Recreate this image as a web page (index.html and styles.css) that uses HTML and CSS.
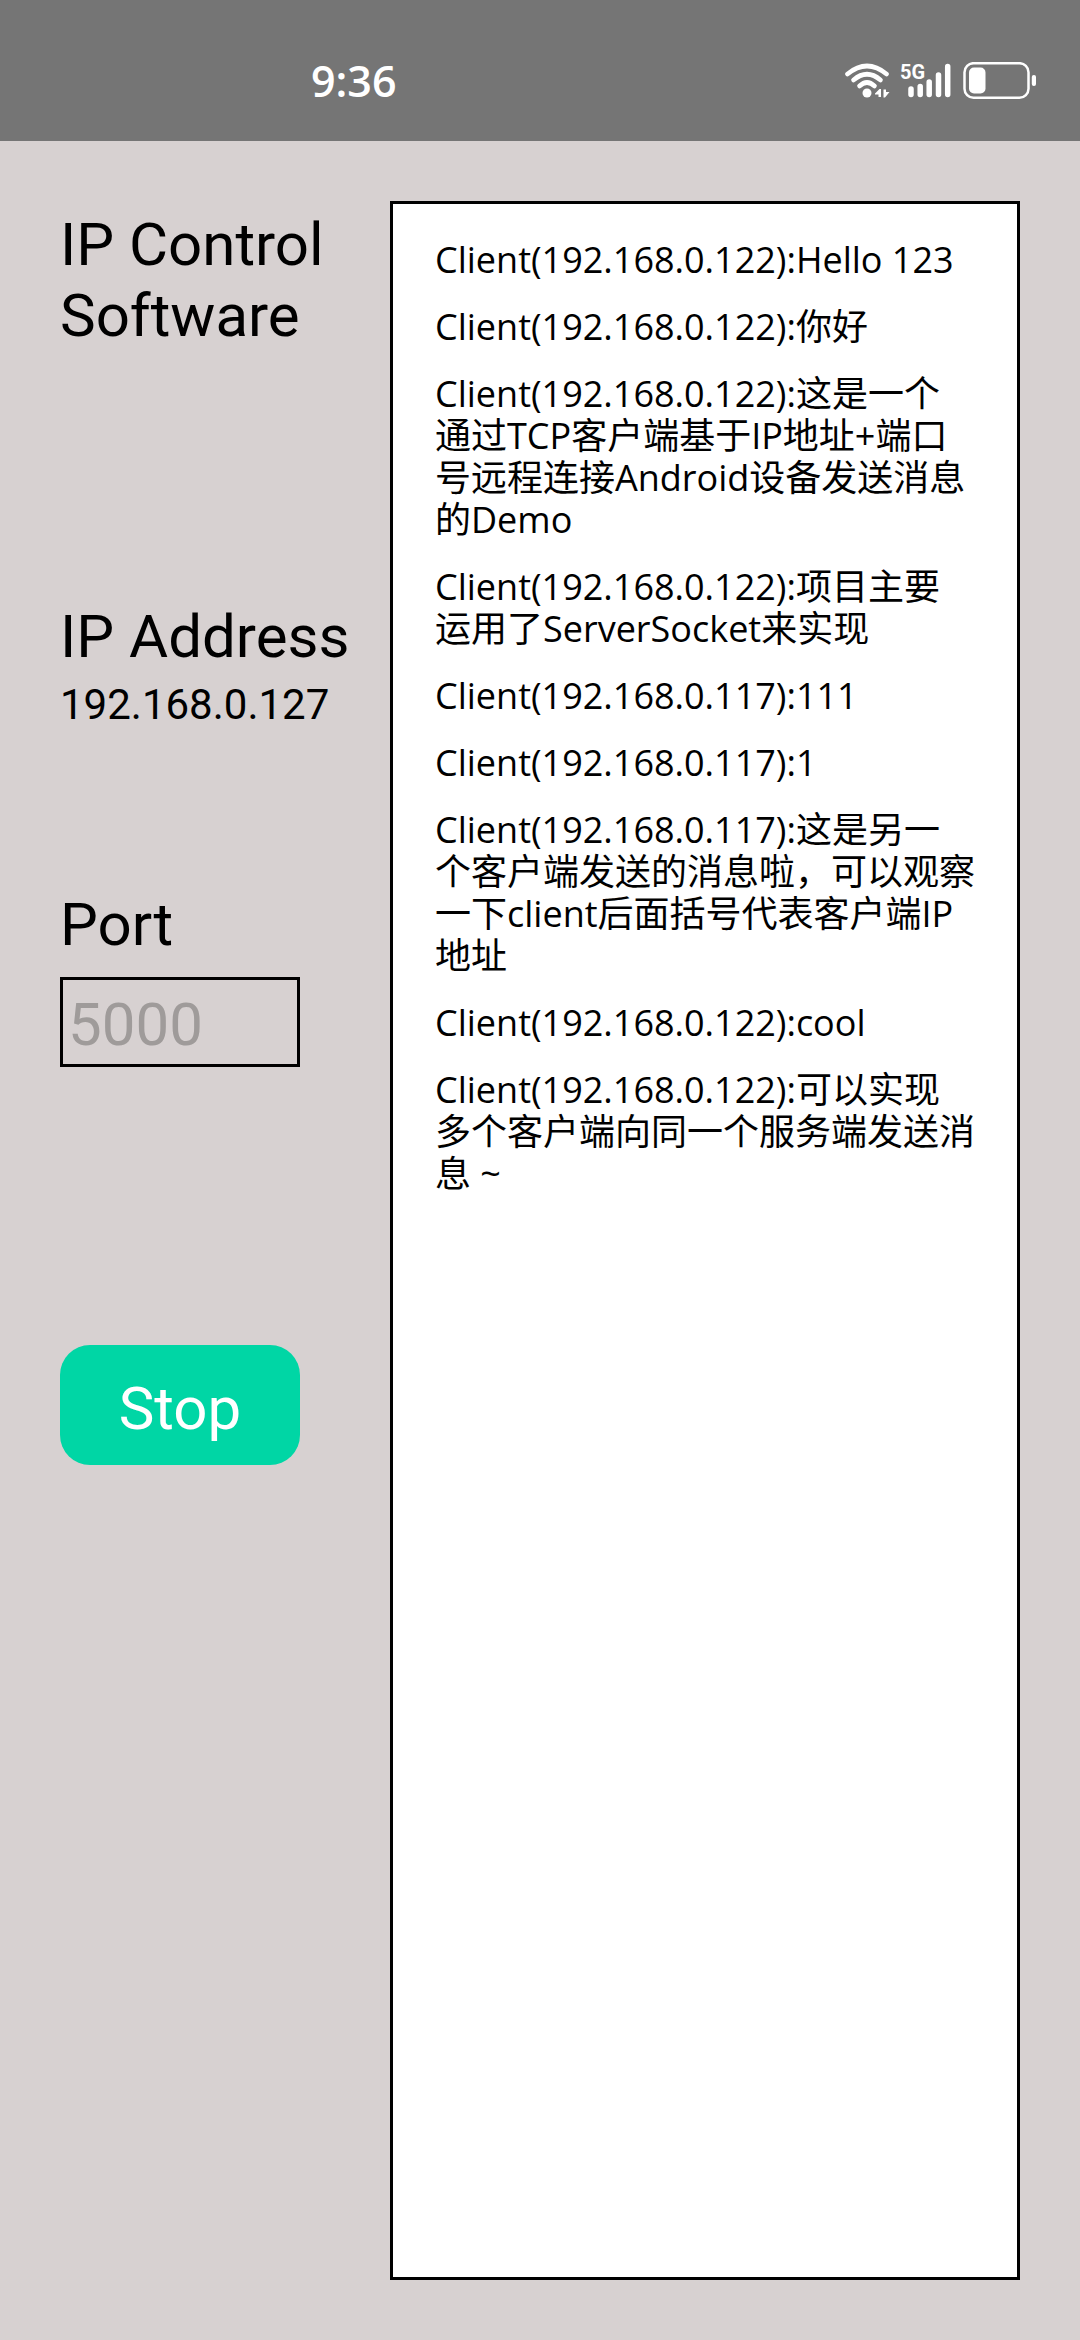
FILE: index.html
```
<!DOCTYPE html>
<html lang="zh-CN">
<head>
<meta charset="utf-8">
<meta name="viewport" content="width=device-width">
<title>IP Control Software</title>
<link rel="stylesheet" href="styles.css">
</head>
<body>
<header class="status-bar">
  <time class="clock">9:36</time>
  <div class="indicators">
    <svg class="wifi" width="46" height="38" viewBox="844 62 46 38" aria-label="Wi-Fi">
      <g fill="none" stroke="#fff" stroke-width="4.6" stroke-linecap="round">
        <path d="M847.5 74Q867 58 886.5 74"/>
        <path d="M853.5 80Q867 68.500 880.500 80"/>
        <path d="M859.500 86Q867 79 874.500 86"/>
      </g>
      <circle cx="867" cy="93" r="4.500" fill="#fff"/>
      <path fill="#fff" d="M875 93.500L879.500 89H881V97H878.500V94.500H875ZM883.500 89.500H886V92H889.500L885 97.500H883.500Z"/>
    </svg>
    <div class="cellular">
      <span class="network">5G</span>
      <svg width="52" height="38" viewBox="900 62 52 38" aria-label="Signal">
        <g stroke="#fff" stroke-width="5.500" stroke-linecap="round">
          <path d="M911 89V94.500M920.200 86.500V94.500M929.200 82V94.500M938.500 75V94.500M947.700 66.500V94.500"/>
        </g>
      </svg>
    </div>
    <svg class="battery" width="76" height="38" viewBox="962 62 76 38" aria-label="Battery">
      <rect x="964.500" y="63.200" width="64" height="34.600" rx="9" fill="none" stroke="#fff" stroke-width="2.500"/>
      <rect x="969" y="67.500" width="16.500" height="26" rx="5" fill="#fff"/>
      <rect x="1031.800" y="75" width="4.200" height="11" rx="2" fill="#fff"/>
    </svg>
  </div>
</header>
<main class="screen">
  <form class="controls">
    <h1 class="heading">IP Control Software</h1>
    <section class="address">
      <h2 class="heading">IP Address</h2>
      <p class="ip">192.168.0.127</p>
    </section>
    <label class="heading port-label" for="port">Port</label>
    <input class="port" id="port" type="text" inputmode="numeric" placeholder="5000">
    <button class="stop" type="button">Stop</button>
  </form>
  <section class="log" aria-label="Messages">
    <p>Client(192.168.0.122):Hello 123</p>
    <p>Client(192.168.0.122):你好</p>
    <p>Client(192.168.0.122):这是一个通过TCP客户端基于IP地址+端口号远程连接Android设备发送消息的Demo</p>
    <p>Client(192.168.0.122):项目主要运用了ServerSocket来实现</p>
    <p>Client(192.168.0.117):111</p>
    <p>Client(192.168.0.117):1</p>
    <p>Client(192.168.0.117):这是另一个客户端发送的消息啦，可以观察一下client后面括号代表客户端IP地址</p>
    <p>Client(192.168.0.122):cool</p>
    <p>Client(192.168.0.122):可以实现多个客户端向同一个服务端发送消息 ~</p>
  </section>
</main>
</body>
</html>
```
FILE: styles.css
```
* {
  box-sizing: border-box;
}

body {
  display: flex;
  flex-direction: column;
  min-height: 100vh;
  margin: 0;
  background: #d7d1d1;
  color: #000;
  font-family: "Open Sans", "Noto Sans CJK SC", sans-serif;
}

h1, h2, p {
  margin: 0;
}

.status-bar {
  display: flex;
  align-items: center;
  justify-content: space-between;
  height: 141px;
  padding: 20px 42px 0 311px;
  background: #757575;
  color: #fff;
}

.clock {
  font-size: 43px;
  font-weight: 600;
  line-height: 60px;
}

.indicators {
  display: flex;
  gap: 10px;
}

.indicators svg {
  display: block;
}

.cellular {
  position: relative;
}

.network {
  position: absolute;
  top: 0;
  left: 0;
  font: bold 20px/20px Roboto, sans-serif;
}

.screen {
  display: grid;
  grid-template-columns: 330px 1fr;
  flex: 1;
  padding: 60px;
}

.controls {
  display: flex;
  flex-direction: column;
  align-items: flex-start;
  padding-top: 8px;
  font-family: Roboto, sans-serif;
}

.heading {
  font-size: 60px;
  font-weight: 400;
  line-height: 71px;
}

.address {
  margin-top: 250px;
  white-space: nowrap;
}

.ip {
  font-size: 42px;
  line-height: 66px;
}

.port-label {
  margin-top: 151px;
}

.port {
  width: 240px;
  height: 90px;
  margin-top: 17px;
  padding: 4px 5px 0;
  border: 3px solid #000;
  border-radius: 0;
  background: transparent;
  color: #000;
  font-family: inherit;
  font-size: 60px;
}

.port::placeholder {
  color: #9f9b9a;
}

.stop {
  width: 240px;
  height: 120px;
  margin-top: 278px;
  padding: 6px 0 0;
  border: 0;
  border-radius: 30px;
  background: #00d6a5;
  color: #fff;
  font-family: inherit;
  font-size: 60px;
}

.log {
  display: flex;
  flex-direction: column;
  gap: 25px;
  padding: 35px 42px;
  border: 3px solid #000;
  background: #fff;
  font-size: 36px;
  line-height: 42px;
}
```
